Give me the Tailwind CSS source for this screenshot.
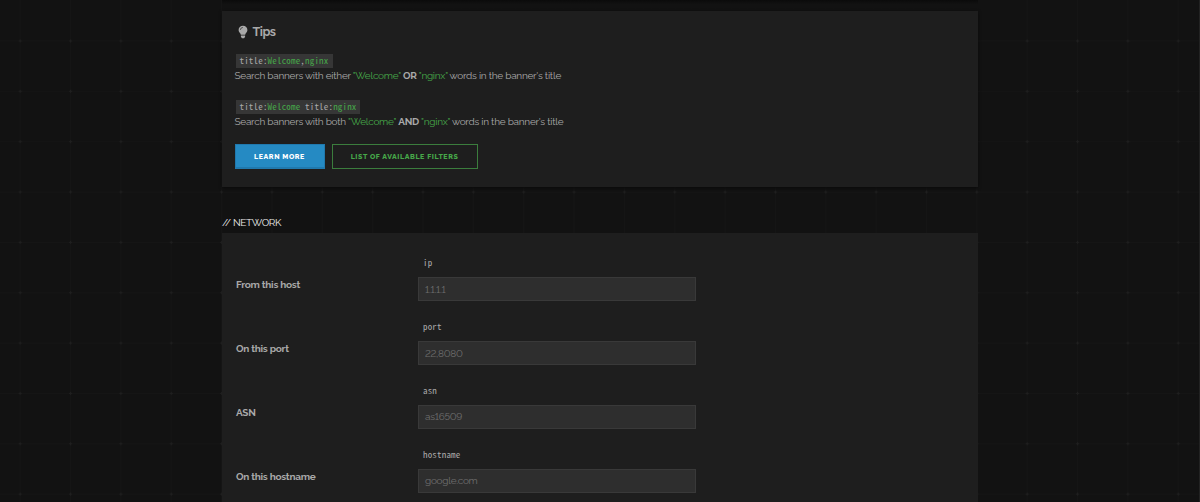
<!DOCTYPE html>
<html lang="en">
<head>
  <meta charset="UTF-8">
  <title>Search Filters</title>
  <meta name="viewport" content="width=device-width, initial-scale=1.0">
  <script src="https://cdn.jsdelivr.net/npm/@tailwindcss/browser@4"></script>
</head>
<body class="relative h-[502px] overflow-hidden bg-[#121212] font-[Raleway,Lato,sans-serif] text-[10px] lining-nums tracking-[-0.26px] text-[#a9a9a9]">

  <!-- background grid -->
  <svg class="absolute inset-0 -z-0" width="1200" height="502">
    <defs>
      <pattern id="grid" x="-5" y="15.8" width="50.35" height="50.35" patternUnits="userSpaceOnUse">
        <path d="M25.2 0V50.35M0 25.2H50.35" stroke="#151515" stroke-width="1"/>
        <path d="M25.2 23.7v3M23.7 25.2h3" stroke="#1f1f1f" stroke-width="1"/>
      </pattern>
    </defs>
    <rect width="1200" height="502" fill="url(#grid)"/>
    <rect x="1199" width="1" height="502" fill="#222222"/>
  </svg>

  <main class="relative mx-auto w-[756px]">
    <div class="h-[11px] bg-linear-to-b from-[#0b0b0b] to-[#121212] to-40%"></div>

    <!-- Tips -->
    <section class="h-[176px] bg-[#1e1e1e] pl-[12.5px] pt-[13px] shadow-[0_1px_3px_#0a0a0a]">
      <h4 class="flex h-4 items-center text-[12.5px] font-bold tracking-[-0.5px]">
        <svg class="ml-[3px] mr-[5px]" width="10" height="14" viewBox="0 0 10 14" fill="#a9a9a9">
          <path d="M5 .7C2.4.7.6 2.6.6 4.9c0 1.2.5 2 1.2 2.9.6.7.9 1.3 1 2h4.4c.1-.7.4-1.3 1-2 .7-.9 1.2-1.7 1.2-2.9C9.4 2.6 7.6.7 5 .7zM2.9 10.4v1.3l1 1.5h2.2l1-1.5v-1.3z"/>
          <path d="M2.5 4.8C2.5 3.5 3.5 2.5 4.8 2.5" fill="none" stroke="#1e1e1e" stroke-width=".7"/>
        </svg>
        Tips
      </h4>

      <div class="mt-[14px] h-[46px]">
        <code class="ml-[1.5px] flex h-[13.5px] w-[97px] items-center whitespace-pre bg-[#363636] pl-[3.5px] font-['Noto_Sans_Mono_CJK_JP',monospace] text-[9px] tracking-[0.18px]">title:<span class="text-[#46a849]">Welcome</span>,<span class="text-[#46a849]">nginx</span></code>
        <p class="whitespace-nowrap leading-[15px]">Search banners with either <span class="text-[#46a849]">"Welcome"</span> <b>OR</b> <span class="text-[#46a849]">"nginx"</span> words in the banner's title</p>
      </div>
      <div class="h-[44px]">
        <code class="ml-[1.5px] flex h-[13.5px] w-[124px] items-center whitespace-pre bg-[#363636] pl-[3.5px] font-['Noto_Sans_Mono_CJK_JP',monospace] text-[9px] tracking-[0.18px]">title:<span class="text-[#46a849]">Welcome</span> title:<span class="text-[#46a849]">nginx</span></code>
        <p class="whitespace-nowrap leading-[15px]">Search banners with both <span class="text-[#46a849]">"Welcome"</span> <b>AND</b> <span class="text-[#46a849]">"nginx"</span> words in the banner's title</p>
      </div>

      <div class="flex gap-[7px] pt-[0.4px] text-[7px] font-extrabold tracking-[0.6px]">
        <a class="flex h-[24.5px] w-[90px] items-center justify-center border border-b-2 border-[#2079ae] bg-[#258ac3] pt-[2px] text-white">LEARN MORE</a>
        <a class="flex h-[24.5px] w-[146px] items-center justify-center border border-[#3b7d3d] pt-px text-[#46a849]">LIST OF AVAILABLE FILTERS</a>
      </div>
    </section>

    <!-- Network -->
    <h5 class="mt-[28px] h-[18.4px] text-[10px] leading-[15px] tracking-[-0.35px] text-[#f0f0f0]">// NETWORK</h5>
    <section class="h-[270px] bg-[#1e1e1e] pl-[14px] pt-[23px]">
      <div class="flex h-16">
        <label class="w-[182px] pt-[21px] font-bold leading-[15px]">From this host</label>
        <div>
          <code class="block h-[21px] pl-[5px] font-['Noto_Sans_Mono_CJK_JP',monospace] text-[9px] leading-[14px] tracking-[0.18px]">ip</code>
          <div class="flex h-[24px] w-[278px] items-center border border-[#393939] bg-[#2e2e2e] pl-[6px] text-[#6f6f6f]">1.1.1.1</div>
        </div>
      </div>
      <div class="flex h-16">
        <label class="w-[182px] pt-[21px] font-bold leading-[15px]">On this port</label>
        <div>
          <code class="block h-[21px] pl-[5px] font-['Noto_Sans_Mono_CJK_JP',monospace] text-[9px] leading-[14px] tracking-[0.18px]">port</code>
          <div class="flex h-[24px] w-[278px] items-center border border-[#393939] bg-[#2e2e2e] pl-[6px] text-[#6f6f6f]">22,8080</div>
        </div>
      </div>
      <div class="-mt-[0.5px] flex h-16">
        <label class="w-[182px] pt-[21px] font-bold leading-[15px]">ASN</label>
        <div>
          <code class="block h-[21px] pl-[5px] font-['Noto_Sans_Mono_CJK_JP',monospace] text-[9px] leading-[14px] tracking-[0.18px]">asn</code>
          <div class="flex h-[24px] w-[278px] items-center border border-[#393939] bg-[#2e2e2e] pl-[6px] text-[#6f6f6f]">as16509</div>
        </div>
      </div>
      <div class="flex h-16">
        <label class="w-[182px] pt-[21px] font-bold leading-[15px]">On this hostname</label>
        <div>
          <code class="block h-[21px] pl-[5px] font-['Noto_Sans_Mono_CJK_JP',monospace] text-[9px] leading-[14px] tracking-[0.18px]">hostname</code>
          <div class="flex h-[24px] w-[278px] items-center border border-[#393939] bg-[#2e2e2e] pl-[6px] text-[#6f6f6f]">google.com</div>
        </div>
      </div>
    </section>
  </main>
</body>
</html>
